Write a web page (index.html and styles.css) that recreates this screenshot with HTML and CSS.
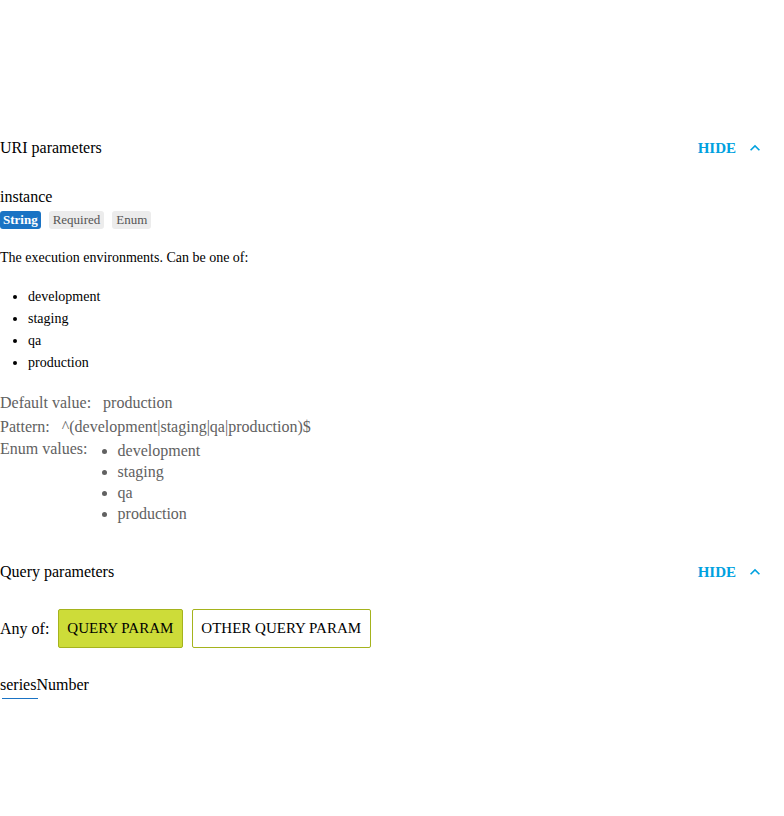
FILE: index.html
```html
<!DOCTYPE html>
<html>
<head>
<meta charset="utf-8">
<link rel="stylesheet" href="styles.css">
</head>
<body>
<main class="doc">
  <section class="params">
    <header class="section-head">
      <h3 class="section-title">URI parameters</h3>
      <button class="toggle">HIDE
        <svg class="chev" width="20" height="20" viewBox="0 0 24 24"><path d="M7.41 15.41 12 10.83l4.59 4.58L18 14l-6-6-6 6z" fill="currentColor"/></svg>
      </button>
    </header>
    <div class="param">
      <div class="param-name">instance</div>
      <div class="badges">
        <span class="badge badge-type">String</span>
        <span class="badge">Required</span>
        <span class="badge">Enum</span>
      </div>
      <p class="desc">The execution environments. Can be one of:</p>
      <ul class="desc-list">
        <li>development</li>
        <li>staging</li>
        <li>qa</li>
        <li>production</li>
      </ul>
      <div class="prop"><span class="prop-label">Default value:</span><span class="prop-val">production</span></div>
      <div class="prop"><span class="prop-label">Pattern:</span><span class="prop-val">^(development|staging|qa|production)$</span></div>
      <div class="prop prop-enum"><span class="prop-label">Enum values:</span>
        <ul class="enum-list">
          <li>development</li>
          <li>staging</li>
          <li>qa</li>
          <li>production</li>
        </ul>
      </div>
    </div>
  </section>
  <section class="params query">
    <header class="section-head">
      <h3 class="section-title">Query parameters</h3>
      <button class="toggle">HIDE
        <svg class="chev" width="20" height="20" viewBox="0 0 24 24"><path d="M7.41 15.41 12 10.83l4.59 4.58L18 14l-6-6-6 6z" fill="currentColor"/></svg>
      </button>
    </header>
    <div class="anyof">
      <span class="anyof-label">Any of:</span>
      <button class="opt opt-active">QUERY PARAM</button>
      <button class="opt">OTHER QUERY PARAM</button>
    </div>
    <div class="param param-last">
      <div class="param-name">seriesNumber</div>
      <div class="name-rule"></div>
    </div>
  </section>
</main>
</body>
</html>
```
FILE: styles.css
```css
html, body {
  margin: 0;
  padding: 0;
  background: #fff;
}
body {
  font-family: "Liberation Serif", "Times New Roman", serif;
  color: #000;
  width: 784px;
}
.doc {
  padding-top: 136px;
  padding-right: 20px;
}
.section-head {
  display: flex;
  align-items: center;
  justify-content: space-between;
  height: 24px;
}
.section-title {
  margin: 0;
  font-size: 16px;
  font-weight: normal;
}
.toggle {
  display: flex;
  align-items: center;
  gap: 9px;
  border: 0;
  background: none;
  padding: 0;
  margin-right: -1px;
  font-family: "Liberation Serif", serif;
  font-weight: bold;
  font-size: 15px;
  color: #00a1df;
}
.chev {
  display: block;
  flex-shrink: 0;
}
.param {
  margin-top: 27px;
}
.param-name {
  font-size: 16px;
  line-height: 20px;
}
.badges {
  display: flex;
  gap: 8px;
  margin-top: 4px;
}
.badge {
  font-size: 13px;
  line-height: 18px;
  padding: 0 4px;
  border-radius: 3px;
  background: #ececec;
  color: #555;
}
.badge-type {
  background: #1a73c4;
  color: #fff;
  font-weight: bold;
  padding: 0 3px;
}
.desc {
  font-size: 14px;
  margin: 19px 0 0;
  line-height: 20px;
}
.desc-list {
  margin: 18px 0 0;
  padding-left: 28px;
  font-size: 14px;
}
.desc-list li {
  line-height: 22px;
}
.prop {
  display: flex;
  font-size: 16px;
  color: #616161;
  line-height: 24px;
}
.desc-list + .prop {
  margin-top: 17px;
}
.prop-label {
  margin-right: 12px;
}
.prop-enum .prop-label {
  line-height: 20px;
  margin-right: 0;
}
.enum-list {
  margin: 1px 0 0;
  padding-left: 30px;
  line-height: 21px;
}
.query {
  margin-top: 36px;
}
.anyof {
  display: flex;
  align-items: center;
  gap: 9px;
  margin-top: 25px;
  font-size: 16px;
}
.opt {
  font-family: "Liberation Serif", serif;
  font-size: 15px;
  height: 39px;
  padding: 0 9px 0 8px;
  border: 1px solid #a5b31d;
  border-radius: 2px;
  background: #fff;
  color: #000;
}
.opt-active {
  background: #cddc39;
}
.param-last {
  margin-top: 27px;
}
.name-rule {
  width: 36px;
  height: 1px;
  margin: 3px 0 0 2px;
  background: #1a73c4;
}
```
